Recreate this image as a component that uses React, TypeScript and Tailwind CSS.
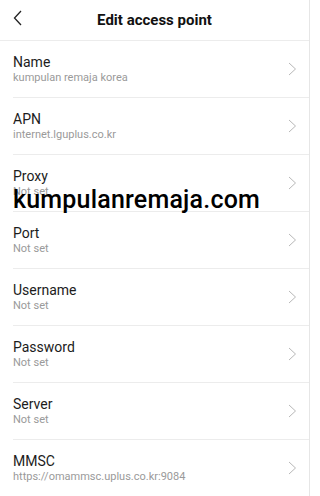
const items = [
  { label: "Name", value: "kumpulan remaja korea" },
  { label: "APN", value: "internet.lguplus.co.kr" },
  { label: "Proxy", value: "Not set" },
  { label: "Port", value: "Not set" },
  { label: "Username", value: "Not set" },
  { label: "Password", value: "Not set" },
  { label: "Server", value: "Not set" },
  { label: "MMSC", value: "https://omammsc.uplus.co.kr:9084" },
];

export default function App() {
  return (
    <div className="relative w-[312px] h-[496px] overflow-hidden bg-white font-['Roboto',sans-serif]">
      <div className="w-[310px] h-full border-r border-[#e6e6e6]">
        {/* Header */}
        <div className="relative h-[41px] border-b border-[#ececec] flex items-center justify-center">
          <svg className="absolute left-[12px] top-[9px]" width="12" height="18" viewBox="0 0 12 18" fill="none">
            <polyline points="9,2 2.5,9 9,16" stroke="#222" strokeWidth="1.3" />
          </svg>
          <h1 className="text-[15px] font-bold text-[#111]">Edit access point</h1>
        </div>

        {/* Settings list */}
        {items.map((item) => (
          <div key={item.label} className="ml-[13px] h-[57px] border-b border-[#ececec] flex items-center pr-[12px]">
            <div className="flex-1 flex flex-col">
              <span className="text-[14px] leading-[18px] text-[#1c1c1c]">{item.label}</span>
              <span className="text-[11px] leading-[14px] text-[#9a9a9a]">{item.value}</span>
            </div>
            <svg width="9" height="14" viewBox="0 0 9 14" fill="none">
              <polyline points="1,1 7.5,7 1,13" stroke="#b8b8b8" strokeWidth="1" />
            </svg>
          </div>
        ))}
      </div>

      {/* Watermark */}
      <div className="absolute left-[13px] top-[187px] text-[25px] leading-none font-medium tracking-[0.2px] text-black">
        kumpulanremaja.com
      </div>
    </div>
  );
}
